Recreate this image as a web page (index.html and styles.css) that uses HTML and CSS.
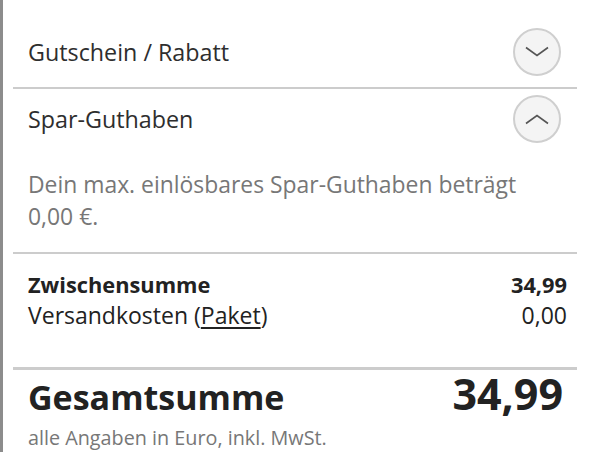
FILE: index.html
```html
<!DOCTYPE html>
<html lang="de">
<head>
<meta charset="utf-8">
<link rel="stylesheet" href="styles.css">
</head>
<body>
<div class="page">
  <div class="acc-row first">
    <span class="acc-title">Gutschein / Rabatt</span>
    <button class="circle" aria-label="Aufklappen">
      <svg width="24" height="12" viewBox="0 0 24 12"><path d="M1 1.5 L12 9.5 L23 1.5" fill="none" stroke="#555" stroke-width="1.6"/></svg>
    </button>
  </div>
  <div class="divider"></div>
  <div class="acc-row second">
    <span class="acc-title">Spar-Guthaben</span>
    <button class="circle" aria-label="Zuklappen">
      <svg width="24" height="12" viewBox="0 0 24 12"><path d="M1 10.5 L12 2.5 L23 10.5" fill="none" stroke="#555" stroke-width="1.6"/></svg>
    </button>
  </div>
  <p class="info">Dein max. einlösbares Spar-Guthaben beträgt 0,00&nbsp;€.</p>
  <div class="divider"></div>
  <div class="sums">
    <div class="sum-row bold"><span>Zwischensumme</span><span>34,99</span></div>
    <div class="sum-row"><span>Versandkosten (<a class="link" href="#">Paket</a>)</span><span>0,00</span></div>
  </div>
  <div class="divider thick"></div>
  <div class="total">
    <span class="total-label">Gesamtsumme</span>
    <span class="total-value">34,99</span>
  </div>
  <p class="note">alle Angaben in Euro, inkl. MwSt.</p>
</div>
</body>
</html>
```
FILE: styles.css
```css
html, body {
  margin: 0;
  padding: 0;
  background: #fff;
}
body {
  font-family: "Open Sans", "Noto Sans", sans-serif;
  color: #222;
}
.page {
  border-left: 3px solid #8c8c8c;
  min-height: 452px;
  box-sizing: border-box;
  padding: 0 13px 0 10px;
}
.acc-row {
  display: flex;
  align-items: center;
  justify-content: space-between;
  padding-left: 15px;
  padding-right: 16px;
}
.acc-row.first {
  padding-top: 28px;
  padding-bottom: 11px;
}
.acc-row.second {
  padding-top: 6px;
}
.acc-title {
  font-size: 23.3px;
  color: #2e2e2e;
}
.circle {
  width: 48px;
  height: 48px;
  border-radius: 50%;
  border: 2px solid #cfcfcf;
  background: #f4f4f4;
  display: flex;
  align-items: center;
  justify-content: center;
  padding: 0;
}
.divider {
  height: 2px;
  background: #cccccc;
}
.divider.thick {
  height: 3px;
}
.info {
  margin: 0;
  padding: 26px 20px 19px 15px;
  font-size: 22.9px;
  line-height: 32px;
  color: #777;
}
.sums {
  padding: 15px 10px 36px 15px;
}
.sum-row {
  display: flex;
  justify-content: space-between;
  font-size: 23px;
  line-height: 31px;
  color: #222;
}
.sum-row.bold {
  font-weight: 700;
  font-size: 21.8px;
}
.link {
  color: inherit;
  text-decoration: underline;
  text-underline-offset: 3px;
}
.total {
  display: flex;
  justify-content: space-between;
  align-items: baseline;
  padding: 0 14px 0 15px;
  line-height: 48px;
}
.total-label {
  font-size: 34px;
  font-weight: 700;
}
.total-value {
  font-size: 43px;
  font-weight: 700;
}
.note {
  margin: 0;
  padding: 4px 0 0 15px;
  font-size: 19.8px;
  line-height: 26px;
  color: #777;
}
```
